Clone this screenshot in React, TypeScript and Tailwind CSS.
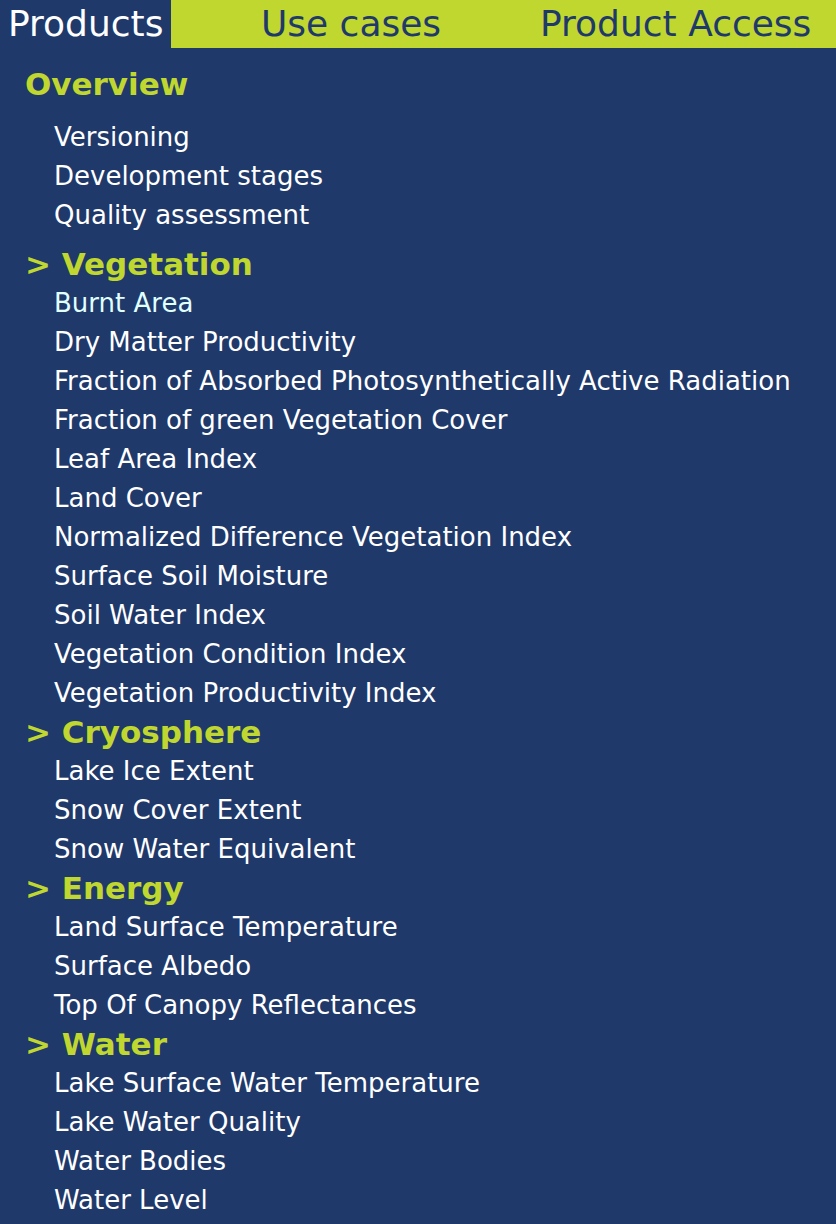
import { FC } from 'react'

interface ISection {
    title: string
    arrow: boolean
    items: string[]
}

const sections: ISection[] = [
    { title: 'Overview', arrow: false, items: ['Versioning', 'Development stages', 'Quality assessment'] },
    {
        title: 'Vegetation',
        arrow: true,
        items: [
            'Burnt Area',
            'Dry Matter Productivity',
            'Fraction of Absorbed Photosynthetically Active Radiation',
            'Fraction of green Vegetation Cover',
            'Leaf Area Index',
            'Land Cover',
            'Normalized Difference Vegetation Index',
            'Surface Soil Moisture',
            'Soil Water Index',
            'Vegetation Condition Index',
            'Vegetation Productivity Index'
        ]
    },
    { title: 'Cryosphere', arrow: true, items: ['Lake Ice Extent', 'Snow Cover Extent', 'Snow Water Equivalent'] },
    { title: 'Energy', arrow: true, items: ['Land Surface Temperature', 'Surface Albedo', 'Top Of Canopy Reflectances'] },
    { title: 'Water', arrow: true, items: ['Lake Surface Water Temperature', 'Lake Water Quality', 'Water Bodies', 'Water Level'] }
]

const Tabs: FC = () => {
    return (
        <div className="flex h-[48px] text-[36px] leading-[48px]">
            <div className="w-[171px] bg-[#1f396b] pl-[8px] text-white">Products</div>
            <div className="flex flex-1 bg-[#c0d72f] text-[#1f396b]">
                <div className="w-[360px] text-center">Use cases</div>
                <div className="flex-1 pl-[9px]">Product Access</div>
            </div>
        </div>
    )
}

const App: FC = () => {
    return (
        <div
            className="min-h-[1224px] w-[836px] bg-[#1f396b]"
            style={{ fontFamily: '"DejaVu Sans", Verdana, sans-serif' }}
        >
            <Tabs />
            <div className="pl-[25px] pt-[17px]">
                {sections.map((section, i) => (
                    <div key={section.title} className={i === 1 ? 'mt-[10px]' : ''}>
                        <div
                            className={`${i === 0 ? 'mb-[14px]' : ''} text-[31px] font-bold leading-[39px] text-[#c0d72f]`}
                        >
                            {section.arrow ? '> ' : ''}
                            {section.title}
                        </div>
                        <ul className="pl-[29px]">
                            {section.items.map((item) => (
                                <li
                                    key={item}
                                    className={`text-[26px] leading-[39px] ${item === 'Burnt Area' ? 'text-[#e0ffff]' : 'text-white'}`}
                                >
                                    {item}
                                </li>
                            ))}
                        </ul>
                    </div>
                ))}
            </div>
        </div>
    )
}

export default App
